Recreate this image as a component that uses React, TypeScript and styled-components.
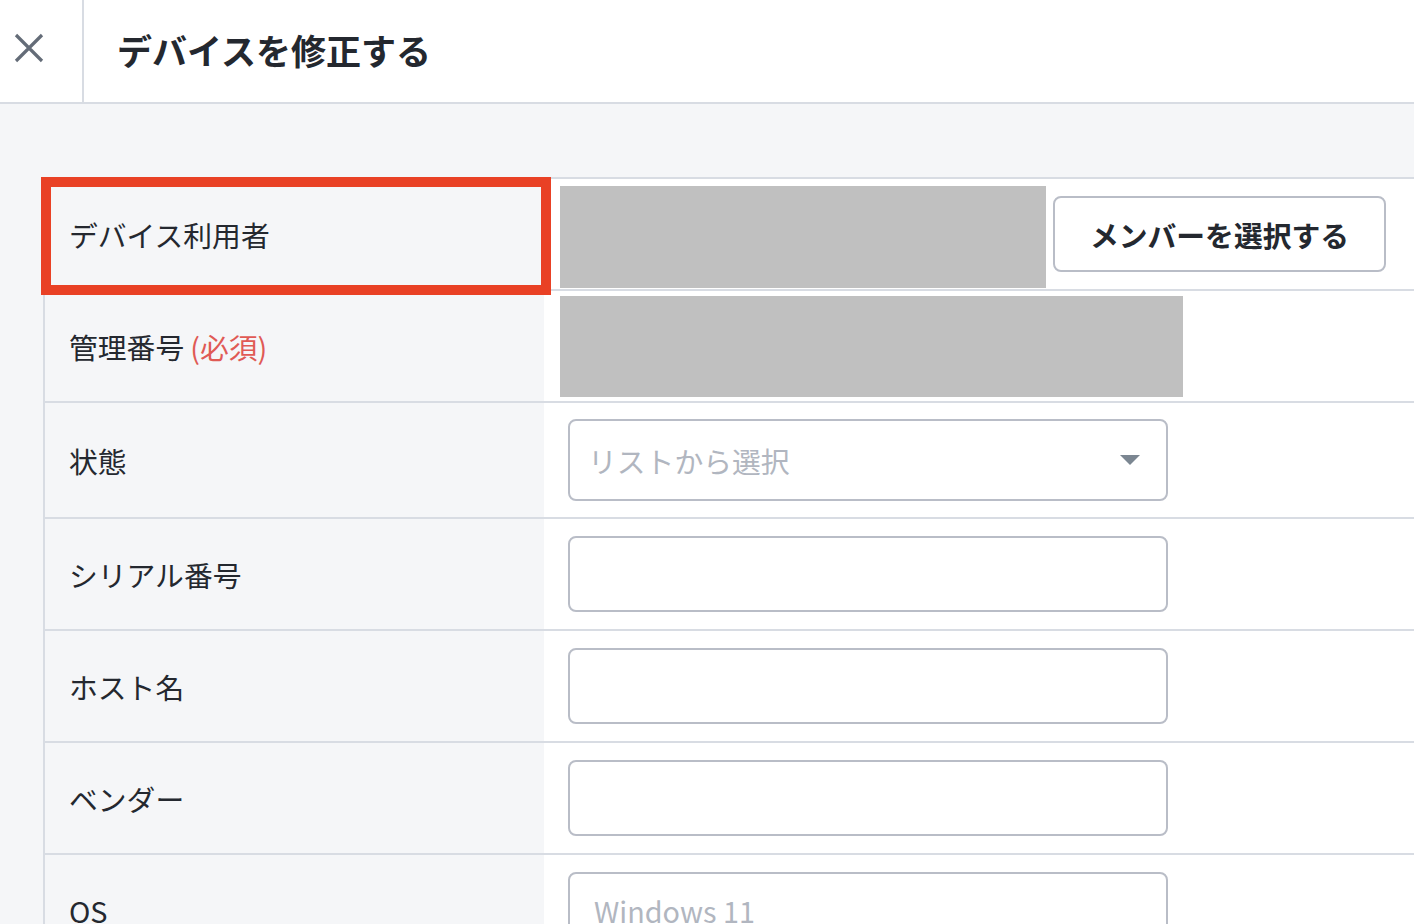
import styled, { createGlobalStyle } from "styled-components";

const GlobalStyle = createGlobalStyle`
	html, body {
		margin: 0;
		padding: 0;
		height: 100%;
		overflow: hidden;
		background: #f5f6f8;
	}
	body {
		font-family: "Noto Sans CJK JP", "Noto Sans", sans-serif;
		color: #24282f;
	}
	* {
		box-sizing: border-box;
	}
`;

const Page = styled.div`
	display: flex;
	flex-direction: column;
	width: 100vw;
	height: 100vh;
	overflow: hidden;
`;

const Header = styled.header`
	display: flex;
	align-items: stretch;
	height: 104px;
	flex-shrink: 0;
	background: #ffffff;
	border-bottom: 2px solid #d8dce3;
`;

const CloseButton = styled.button`
	display: flex;
	align-items: center;
	justify-content: center;
	width: 84px;
	padding: 0 24px 6px 0;
	border: none;
	border-right: 2px solid #d8dce3;
	background: transparent;
	cursor: pointer;
`;

const Title = styled.h1`
	display: flex;
	align-items: center;
	margin: 0 0 4px 33px;
	font-size: 35px;
	font-weight: 700;
	color: #24282f;
`;

const Body = styled.main`
	flex: 1;
	padding: 73px 0 0 43px;
`;

const Table = styled.div`
	position: relative;
	border-top: 2px solid #d8dce3;
	border-left: 2px solid #d8dce3;
`;

const Row = styled.div`
	display: grid;
	grid-template-columns: 499px 1fr;
	border-bottom: 2px solid #d8dce3;
`;

const LabelCell = styled.div`
	display: flex;
	align-items: center;
	min-height: 110px;
	padding: 0 24px;
	background: #f5f6f8;
	font-size: 28.8px;
	color: #24282f;
`;

const Required = styled.span`
	margin-left: 6px;
	color: #e05a55;
`;

const ValueCell = styled.div<{ $dense?: boolean }>`
	display: flex;
	align-items: center;
	gap: 7px;
	min-height: 110px;
	padding: ${(p) => (p.$dense ? "0 16px" : "16px 24px")};
	background: #ffffff;
`;

const Masked = styled.div<{ $width: number; $height: number; $shift?: number }>`
	width: ${(p) => p.$width}px;
	height: ${(p) => p.$height}px;
	margin-top: ${(p) => p.$shift ?? 0}px;
	background: #c0c0c0;
`;

const SelectMember = styled.button`
	width: 333px;
	height: 76px;
	border: 2px solid #b9bdc7;
	border-radius: 8px;
	background: #ffffff;
	font-family: inherit;
	font-size: 28.8px;
	font-weight: 700;
	color: #24282f;
	cursor: pointer;
`;

const Select = styled.div`
	display: flex;
	align-items: center;
	justify-content: space-between;
	width: 600px;
	height: 82px;
	padding: 0 26px 0 18px;
	border: 2px solid #b9bdc7;
	border-radius: 8px;
	background: #ffffff;
	font-size: 28.8px;
	color: #b1b6c0;
`;

const Caret = styled.span`
	width: 0;
	height: 0;
	border-left: 10px solid transparent;
	border-right: 10px solid transparent;
	border-top: 10px solid #7b8691;
`;

const TextInput = styled.input`
	width: 600px;
	height: 76px;
	padding: 0 24px;
	border: 2px solid #b9bdc7;
	border-radius: 8px;
	background: #ffffff;
	font-family: inherit;
	font-size: 28.8px;
	color: #24282f;
	outline: none;

	&::placeholder {
		color: #b1b6c0;
	}
`;

const Highlight = styled.div`
	position: absolute;
	top: -2px;
	left: -4px;
	width: 510px;
	height: 118px;
	border: 10px solid #e94125;
	pointer-events: none;
`;

const CloseIcon = () => (
	<svg width="30" height="30" viewBox="0 0 30 30" fill="none">
		<path d="M2 2 L28 28 M28 2 L2 28" stroke="#646c78" strokeWidth="3.2" />
	</svg>
);

const textRows = [
	{ label: "シリアル番号", placeholder: "" },
	{ label: "ホスト名", placeholder: "" },
	{ label: "ベンダー", placeholder: "" },
	{ label: "OS", placeholder: "Windows 11" },
];

export default function App() {
	return (
		<Page>
			<GlobalStyle />
			<Header>
				<CloseButton aria-label="閉じる">
					<CloseIcon />
				</CloseButton>
				<Title>デバイスを修正する</Title>
			</Header>
			<Body>
				<Table>
					<Row>
						<LabelCell>デバイス利用者</LabelCell>
						<ValueCell $dense>
							<Masked $width={486} $height={102} $shift={6} />
							<SelectMember>メンバーを選択する</SelectMember>
						</ValueCell>
					</Row>
					<Row>
						<LabelCell>
							管理番号<Required>(必須)</Required>
						</LabelCell>
						<ValueCell $dense>
							<Masked $width={623} $height={101} />
						</ValueCell>
					</Row>
					<Row>
						<LabelCell>状態</LabelCell>
						<ValueCell>
							<Select>
								リストから選択
								<Caret />
							</Select>
						</ValueCell>
					</Row>
					{textRows.map((row) => (
						<Row key={row.label}>
							<LabelCell>{row.label}</LabelCell>
							<ValueCell>
								<TextInput placeholder={row.placeholder} />
							</ValueCell>
						</Row>
					))}
					<Highlight />
				</Table>
			</Body>
		</Page>
	);
}
